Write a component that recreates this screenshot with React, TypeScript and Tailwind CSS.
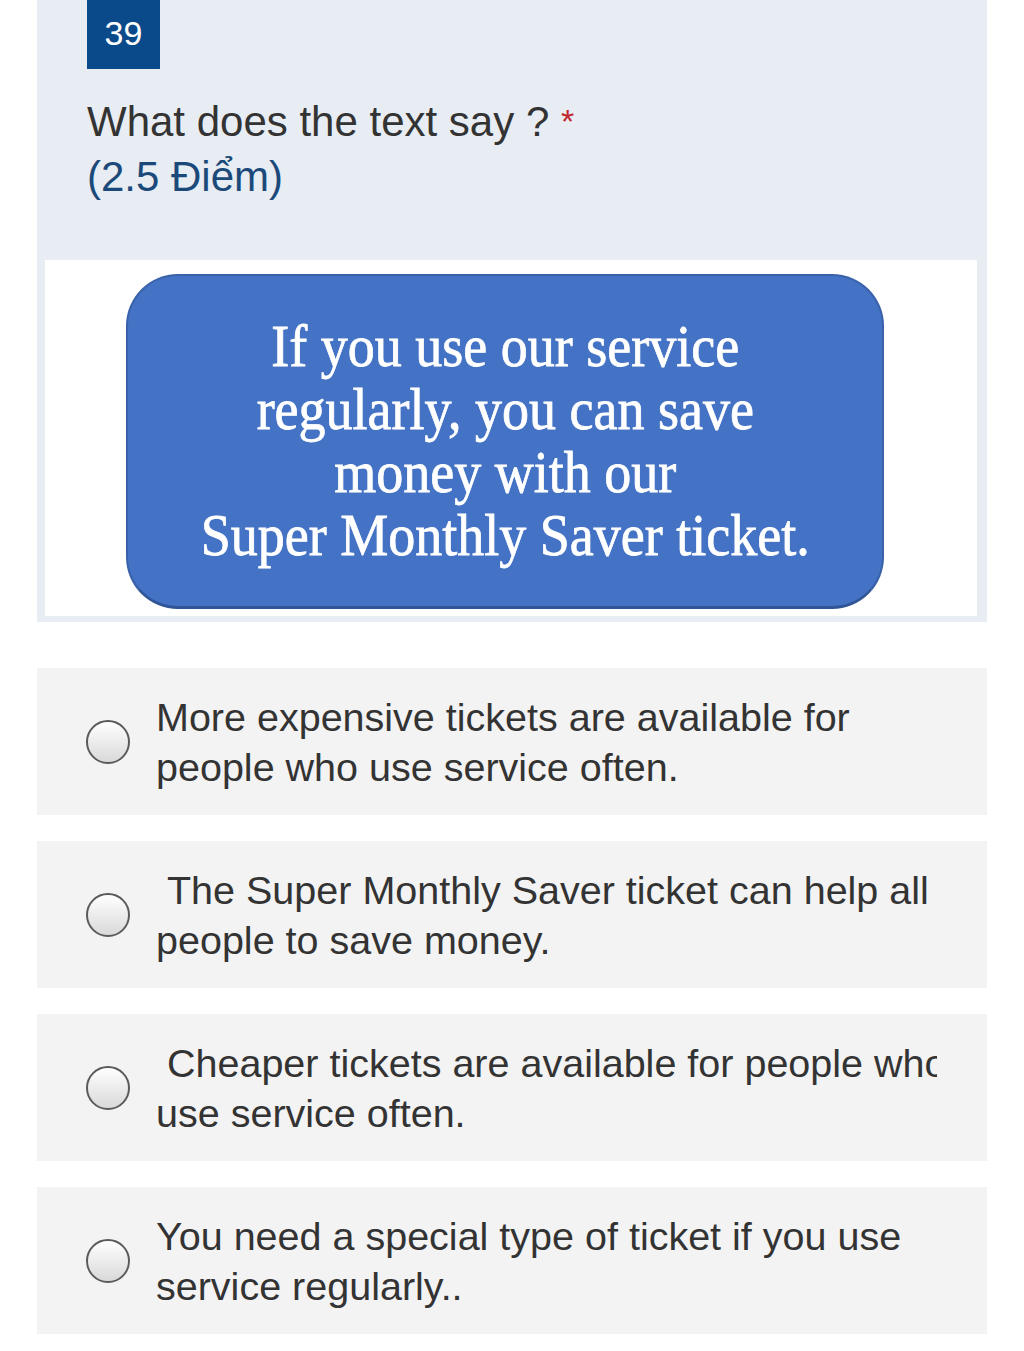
import React from "react";

const options: string[][] = [
  ["More expensive tickets are available for", "people who use service often."],
  ["\u00a0The Super Monthly Saver ticket can help all", "people to save money."],
  ["\u00a0Cheaper tickets are available for people who", "use service often."],
  ["You need a special type of ticket if you use", "service regularly.."],
];

function Radio() {
  return (
    <div className="w-[44px] h-[44px] shrink-0 rounded-full border-2 border-[#5a5a5a] bg-gradient-to-b from-white to-[#d9d9d9]" />
  );
}

export default function App() {
  return (
    <div className="w-full bg-white pb-[17px]" style={{ fontFamily: '"Liberation Sans", Arial, sans-serif' }}>
      <div className="mx-[37px] bg-[#e8ecf3] pb-[6px]">
        <div className="ml-[50px] w-[73px] h-[69px] bg-[#0b4a8a] text-white text-[34px] leading-none pb-[4px] flex items-center justify-center">
          39
        </div>
        <div className="ml-[50px] mt-[25px] text-[42px] leading-[55px]">
          <div className="text-[#333333]">
            What does the text say ? <span className="text-[#c0282d] text-[34px] align-top">*</span>
          </div>
          <div className="text-[#1b4a7a]">(2.5 Điểm)</div>
        </div>
        <div className="mt-[56px] ml-[8px] mr-[10px] h-[356px] bg-white pt-[14px]">
          <div className="ml-[81px] w-[758px] h-[335px] rounded-[52px] bg-[#4472c4] border-2 border-[#3a62aa] border-b-[3px] border-b-[#2f5597] flex items-center justify-center">
            <div
              className="scale-x-[0.9] text-white text-[60px] leading-[63px] text-center whitespace-nowrap [-webkit-text-stroke:0.8px_white]"
              style={{ fontFamily: '"Liberation Serif", "Times New Roman", serif' }}
            >
              <div>If you use our service</div>
              <div>regularly, you can save</div>
              <div>money with our</div>
              <div>Super Monthly Saver ticket.</div>
            </div>
          </div>
        </div>
      </div>
      <div className="mt-[46px] flex flex-col gap-[26px]">
        {options.map((lines, i) => (
          <div key={i} className="mx-[37px] h-[147px] bg-[#f3f3f3] flex items-center">
            <div className="ml-[49px]">
              <Radio />
            </div>
            <div className="ml-[26px] w-[781px] overflow-hidden whitespace-nowrap text-[39.5px] leading-[50px] text-[#333333]">
              <div>{lines[0]}</div>
              <div>{lines[1]}</div>
            </div>
          </div>
        ))}
      </div>
    </div>
  );
}
